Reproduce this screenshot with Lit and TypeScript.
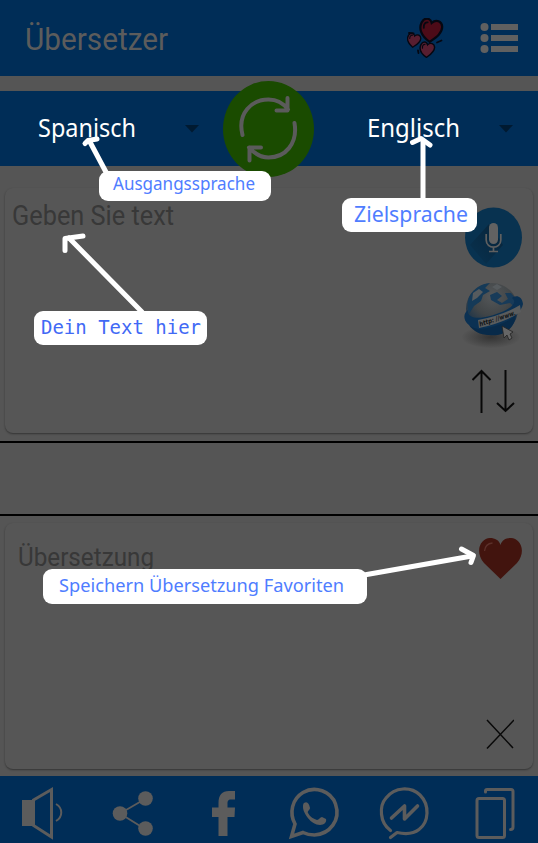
import { LitElement, html, svg, css } from "lit";
import { customElement } from "lit/decorators.js";

const fitted = (text: string, width: number, cls: string, baseline: number) => html`
  <svg class="fit ${cls}" width=${width} height="38">
    <text x="0" y=${baseline} textLength=${width} lengthAdjust="spacingAndGlyphs">${text}</text>
  </svg>`;

interface Callout {
  text: string;
  box: [number, number, number, number];
  tx: number;
  ty: number;
  tw: number;
  cls: string;
  shaft: string;
  head: string;
}

const callouts: Callout[] = [
  { text: "Ausgangssprache", box: [99, 171, 172, 30], tx: 113, ty: 190, tw: 142, cls: "s17",
    shaft: "M107 174L90 142", head: "M85 143.500L88 140.500L97 139" },
  { text: "Zielsprache", box: [342, 198, 135, 34], tx: 354, ty: 222, tw: 114, cls: "s21",
    shaft: "M423 200V141", head: "M412.500 142.500L421 138.500L430 145" },
  { text: "Dein Text hier", box: [34, 311, 173, 34], tx: 41, ty: 334, tw: 160, cls: "mono",
    shaft: "M142 312L69 238", head: "M65 250.500V238.500L83 236" },
  { text: "Speichern Übersetzung Favoriten", box: [43, 569, 324, 35], tx: 59, ty: 592, tw: 285, cls: "s18",
    shaft: "M364 575L472 556", head: "M461.500 549L473.500 555.500L471 562.500" },
];

@customElement("app-root")
export class AppRoot extends LitElement {
  static styles = css`
    :host { display: flex; flex-direction: column; position: relative; width: 538px; height: 843px;
      overflow: hidden; background: #555; font-family: Roboto, sans-serif; color: #5b5b5b; }
    svg { display: block; flex: none; }
    .appbar { height: 76px; background: #002d57; display: flex; align-items: center; box-sizing: border-box;
      padding: 0 20px 0 25px; margin-bottom: 15px; }
    .grow { flex: 1; }
    .fit { overflow: visible; }
    .title { font-size: 31px; fill: #5c5c5c; }
    .hearts { margin-right: 35px; }
    .langs { height: 75px; background: #002d57; display: grid; grid-template-columns: 223px 91px 224px;
      grid-template-rows: 75px; align-items: center; }
    .lang { display: flex; align-items: center; justify-content: space-between; padding: 0 24px 0 38px; }
    .lang.to { padding: 0 25px 0 53px; }
    .name { font: 24.500px "Noto Sans", sans-serif; fill: #fff; }
    .card { box-sizing: border-box; margin: 0 5px; border-radius: 8px; background: #565656;
      box-shadow: 0 1px 2px rgba(0,0,0,.4); display: flex; justify-content: space-between; }
    .source { margin-top: 22px; height: 245px; padding: 8px 10px 0 7px; }
    .result { margin-top: 7px; height: 246px; padding: 14px 10px 0 13px; }
    .hint { font-size: 27px; fill: #383838; }
    .hint.small { font-size: 25px; }
    .tools { display: flex; flex-direction: column; align-items: flex-end; }
    .mic { margin: 11px 1px 0 0; }
    .globe { margin: 12px -1px 0 0; overflow: visible; }
    .swapv { margin: 19px 7px 0 0; }
    .clear { margin: 139px 9px 0 0; }
    .banner { margin-top: 8px; height: 71px; border-top: 2px solid #000; border-bottom: 2px solid #000; }
    .actions { margin-top: 7px; height: 67px; background: #002d57; display: grid; grid-template-columns: repeat(6, 90px);
      align-items: center; width: 538px; overflow: hidden; }
    .overlay { position: absolute; inset: 0; }
    .pill { fill: #fff; }
    .arrow { fill: none; stroke: #fff; stroke-width: 5; stroke-linecap: round; stroke-linejoin: round; }
    .label { font-family: "Noto Sans", sans-serif; fill: #4f7dff; }
    .s17 { font-size: 18px; } .s18 { font-size: 18.500px; } .s21 { font-size: 22px; }
    .mono { font-family: "DejaVu Sans Mono", monospace; font-size: 19px; fill: #4169f5; }
  `;

  private heart(transform: string, fill: string) {
    return svg`<g transform=${transform}>
      <path d="M1 18C-9 13-12 6-10 0C-8-6-2-6 0-1C4-6 10-4 11 1C12 8 6 13 1 18Z" fill=${fill} stroke="#050711" stroke-width="2.200"/>
      <path d="M-7 5C-8 1-6-1-4-1" fill="none" stroke="#080811" stroke-width="1.800" stroke-linecap="round"/></g>`;
  }

  private caret() {
    return html`<svg width="14" height="8"><path d="M0 0H14L7 7.500Z" fill="#001a31"/></svg>`;
  }

  render() {
    return html`
      <header class="appbar">
        ${fitted("Übersetzer", 143, "title", 31)}
        <span class="grow"></span>
        <svg class="hearts" width="38" height="40" viewBox="407 18 38 40">
          ${this.heart("translate(431.500 24) rotate(9) scale(1)", "#4c0b18")}
          ${this.heart("translate(414.500 36.500) rotate(13) scale(.6)", "#571e30")}
          ${this.heart("translate(427.500 45.500) rotate(8) scale(.66)", "#571e30")}
          <path d="M409 33L413.500 33.500M437 42.500L441.500 40.500M418 50.500L418.500 53" stroke="#050711" stroke-width="1.800" stroke-linecap="round"/>
        </svg>
        <svg width="38" height="32" viewBox="480 22 38 32" fill="#606060">
          ${[27, 38, 49].map((y) => svg`<circle cx="484.500" cy=${y} r="4"/><rect x="491" y=${y - 3} width="27" height="6"/>`)}
        </svg>
      </header>

      <section class="langs">
        <div class="lang">${fitted("Spanisch", 98, "name", 27)}${this.caret()}</div>
        <svg width="92" height="96" viewBox="223 80 92 96">
          <ellipse cx="268.500" cy="128" rx="45.500" ry="48" fill="#1a4b00"/>
          <g fill="none" stroke="#5b5b5b" stroke-width="4" stroke-linecap="round" stroke-linejoin="round">
            <path d="M242.500 134C237 112 252 98.500 268.500 98.500C278 98.500 284 103 288 108.500M287.500 97V109.500H276.500"/>
            <path d="M294.500 122C298 143 285 156.500 268.500 156.500C260 156.500 254 152 249 146.500M249.500 159.500V146.500H261"/>
          </g>
        </svg>
        <div class="lang to">${fitted("Englisch", 93, "name", 27)}${this.caret()}</div>
      </section>

      <section class="card source">
        ${fitted("Geben Sie text", 162, "hint", 28.5)}
        <div class="tools">
          <svg class="mic" width="57" height="61" viewBox="465 207 57 61">
            <defs><linearGradient id="shade" x1="1" y1="0" x2="0" y2="1"><stop stop-color="#082338"/><stop offset="1" stop-color="#083250"/></linearGradient></defs>
            <ellipse cx="493.500" cy="237.500" rx="28.500" ry="30" fill="#083250"/>
            <path d="M489 224L470 245L486 264L503 245Z" fill="url(#shade)"/>
            <rect x="489" y="223" width="9" height="21" rx="4.500" fill="#626262"/>
            <path d="M486.200 234V240C486.200 249.500 500.800 249.500 500.800 240V234M493.500 247V251M489 251.500H498" fill="none" stroke="#606060" stroke-width="1.700"/>
          </svg>
          <svg class="globe" width="62" height="70" viewBox="462 280 62 70">
            <defs>
              <radialGradient id="ball" cx=".5" cy=".25" r=".75"><stop stop-color="#545759"/><stop offset=".5" stop-color="#414547"/><stop offset="1" stop-color="#092b4b"/></radialGradient>
              <radialGradient id="ground"><stop stop-color="#333"/><stop offset="1" stop-color="#555"/></radialGradient>
            </defs>
            <ellipse cx="491" cy="337" rx="29" ry="11" fill="url(#ground)"/>
            <circle cx="492" cy="309" r="26" fill="url(#ball)"/>
            <path d="M469 297C474 288 481 284 490 283L485 288L490 291L483 295L481 301L474 306L469 314C467 308 467 302 469 297Z" fill="#153a58"/>
            <path d="M490 295L497 292L502 296L497 300L502 303L508 299L505 293L511 293C516 298 518 305 517 309L510 303L500 305L491 300Z" fill="#183b59"/>
            <path d="M473 293L479 289L483 292L477 298L472 301ZM497 284L502 287L497 290L492 287Z" fill="#565b5e"/>
            <path d="M469 325C485 332 507 322 516 314C515 331 500 337 489 335C480 335 473 331 469 325Z" fill="#082a49"/>
            <path d="M468 310C461 315 464 326 478 329C497 328 520 318 523 304C522 295 515 295 512 298C520 304 505 312 490 316C479 319 467 319 468 310Z" fill="#0b3153"/>
            <path d="M478 320Q502 316 520 305L521 312Q503 323 479 328Z" fill="#5a5c5d"/>
            <text x="480" y="326.500" transform="rotate(-18 480 326.500)" font-family="DejaVu Sans, sans-serif" font-style="italic" font-weight="bold" font-size="6.500" textLength="38" lengthAdjust="spacingAndGlyphs" fill="#101315">http: //www.</text>
            <path d="M502 326L504 338L507 335L509 340L512 338L510 334L513 332Z" fill="#666" stroke="#222" stroke-width=".8"/>
          </svg>
          <svg class="swapv" width="44" height="44" viewBox="472 369 44 44" fill="none" stroke="#080808" stroke-width="2">
            <path d="M481.500 413V371M472.500 380L481.500 371L490.500 380M505.500 370V411M497 403L505.500 411L514 403"/>
          </svg>
        </div>
      </section>

      <div class="banner"></div>

      <section class="card result">
        ${fitted("Übersetzung", 136, "hint small", 28.5)}
        <div class="tools">
          <svg width="45" height="43" viewBox="478 537 45 43">
            <path d="M500.500 579L484 563C474 551 481 538 490 538C495 538 499 540 500.500 545C502 540 506 538 511 538C520 538 527 551 517 563Z" fill="#42140e"/>
            <path d="M484.500 551C485 546 488 543.500 492.500 543" fill="none" stroke="#5c302a" stroke-width="1.300"/>
          </svg>
          <svg class="clear" width="28" height="30" viewBox="486 719 28 30"><path d="M487 720L513 748M514 720L487 748.500" stroke="#090909" stroke-width="1.500"/></svg>
        </div>
      </section>

      <footer class="actions">
        <svg width="90" height="67" viewBox="0 776 90 67" fill="none" stroke="#5c5c5c">
          <path d="M22 800H33V826H22Z" fill="#5c5c5c" stroke="none"/>
          <path d="M33.500 800L51.500 789.500V837L33.500 825.500Z" stroke-width="3"/>
          <path d="M56 804C63 808 63 817 56 821" stroke-width="2"/>
        </svg>
        <svg width="90" height="67" viewBox="90 776 90 67" fill="#5c5c5c">
          <path d="M145 799L120 813.500L145 829" fill="none" stroke="#5c5c5c" stroke-width="1.800"/>
          <circle cx="120" cy="813.500" r="7.300"/><circle cx="145.500" cy="798.500" r="7.300"/><circle cx="145.500" cy="828.500" r="7.300"/>
        </svg>
        <svg width="90" height="67" viewBox="180 776 90 67">
          <path d="M218.500 836V817H212V807.500H218.500V803C218.500 795 222 791 229 791H235V799.500H231C228 799.500 227.500 801 227.500 804V807.500H235L234.500 817H227.500V836Z" fill="#5c5c5c"/>
        </svg>
        <svg width="90" height="67" viewBox="270 776 90 67">
          <path d="M291.500 836.500L295 824C289 813 292 799 303 792.500C315 785.500 331 791 335.500 804C341 820 330 834 314.500 835C309.500 835 306 834 303 832.500Z" fill="none" stroke="#5c5c5c" stroke-width="3.600"/>
          <path d="M304 803C307 801 309 803 310 808C310 810 307 811 308 813C310 817 314 819 317 820C319 820 320 817 322 817L326 819C327 822 324 825 320 825C311 825 303 813 303 807C303 805 303 804 304 803Z" fill="#5c5c5c"/>
        </svg>
        <svg width="90" height="67" viewBox="360 776 90 67" fill="none" stroke="#5c5c5c" stroke-width="3.200" stroke-linecap="round" stroke-linejoin="round">
          <path d="M390.500 830.500C379.500 822.500 379 806 386 798C395 786.500 411 786.500 420 795C430 805 429 822 419 829.500C412 835 404 834 397 832.500L390.500 837.500"/>
          <path d="M391.500 818L404.500 806V819L417.500 806" stroke-width="3.600"/>
        </svg>
        <svg width="90" height="67" viewBox="450 776 90 67" fill="none" stroke="#5c5c5c" stroke-width="3" stroke-linecap="round">
          <rect x="477" y="798.500" width="27.500" height="39" rx="2"/>
          <path d="M485.500 792V791Q485.500 789.500 487 789.500H511Q513 789.500 513 791.500V827Q513 829.500 510.500 829.500"/>
        </svg>
      </footer>

      <svg class="overlay" width="538" height="843">
        ${callouts.map((c) => svg`
          <path class="arrow" d=${c.shaft}/><path class="arrow" d=${c.head}/>
          <rect class="pill" x=${c.box[0]} y=${c.box[1]} width=${c.box[2]} height=${c.box[3]} rx="9"/>
          <text class="label ${c.cls}" x=${c.tx} y=${c.ty} textLength=${c.tw} lengthAdjust="spacingAndGlyphs">${c.text}</text>`)}
      </svg>`;
  }
}
